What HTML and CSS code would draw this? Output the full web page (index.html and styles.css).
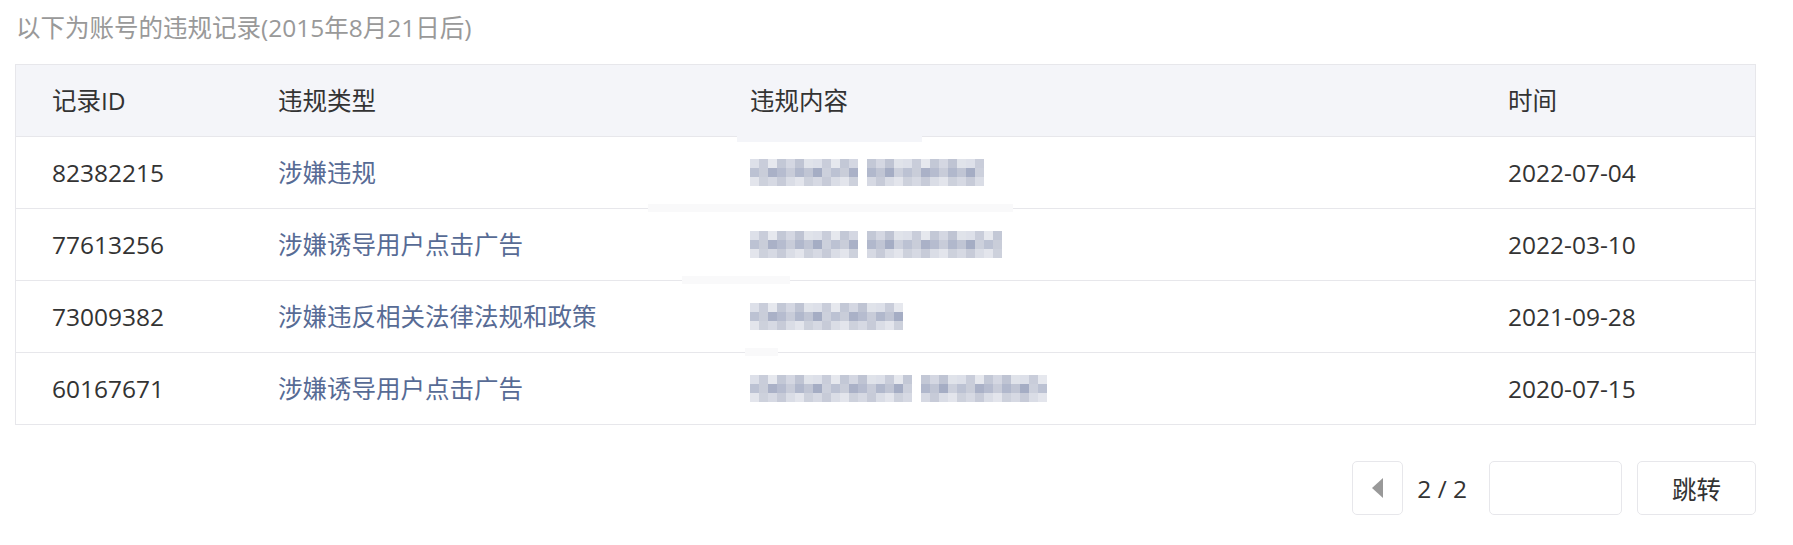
FILE: index.html
```html
<!DOCTYPE html>
<html lang="zh-CN">
<head>
<meta charset="utf-8">
<title>违规记录</title>
<link rel="stylesheet" href="styles.css">
</head>
<body>
<div class="page">
  <p class="title">以下为账号的违规记录(2015年8月21日后)</p>
  <div class="table">
    <div class="row head">
      <div class="cell">记录ID</div>
      <div class="cell">违规类型</div>
      <div class="cell">违规内容</div>
      <div class="cell">时间</div>
    </div>
    <div class="tbody">
      <div class="row">
        <div class="cell">82382215</div>
        <div class="cell"><a class="link" href="#">涉嫌违规</a></div>
        <div class="cell"><span class="blur w108"></span><span class="blur w117"></span></div>
        <div class="cell">2022-07-04</div>
      </div>
      <div class="row">
        <div class="cell">77613256</div>
        <div class="cell"><a class="link" href="#">涉嫌诱导用户点击广告</a></div>
        <div class="cell"><span class="blur w108"></span><span class="blur w135"></span></div>
        <div class="cell">2022-03-10</div>
      </div>
      <div class="row">
        <div class="cell">73009382</div>
        <div class="cell"><a class="link" href="#">涉嫌违反相关法律法规和政策</a></div>
        <div class="cell"><span class="blur w153"></span></div>
        <div class="cell">2021-09-28</div>
      </div>
      <div class="row">
        <div class="cell">60167671</div>
        <div class="cell"><a class="link" href="#">涉嫌诱导用户点击广告</a></div>
        <div class="cell"><span class="blur w162"></span><span class="blur w126"></span></div>
        <div class="cell">2020-07-15</div>
      </div>
    </div>
    <div class="smear s1"></div>
    <div class="smear s2"></div>
    <div class="smear s3"></div>
    <div class="smear s4"></div>
  </div>
  <div class="pager">
    <button class="btn prev" type="button"><span class="tri"></span></button>
    <span class="count">2 / 2</span>
    <input class="btn jump-input" type="text">
    <button class="btn jump" type="button">跳转</button>
  </div>
</div>
</body>
</html>
```
FILE: styles.css
```css
* { box-sizing: border-box; }

body {
  margin: 0;
  background: #fff;
  font-family: "Open Sans", "Noto Sans CJK SC", sans-serif;
  color: #333;
}

.page {
  padding-left: 15px;
  width: 1756px;
}

.title {
  margin: 0;
  padding: 12px 0 0 1px;
  font-size: 24.5px;
  line-height: 32px;
  color: #999;
}

.table {
  position: relative;
  margin-top: 20px;
  width: 1741px;
  border: 1px solid #e7e7eb;
}

.row {
  display: grid;
  grid-template-columns: 226px 472px 758px 1fr;
  height: 72px;
  border-bottom: 1px solid #e7e7eb;
  font-size: 24.5px;
  line-height: 32px;
}

.head {
  background: #f4f5f9;
}

.tbody .row:last-child {
  border-bottom: 0;
  height: 71px;
}

.cell {
  display: flex;
  align-items: center;
  gap: 9px;
  padding-left: 36px;
  white-space: nowrap;
}

.link {
  color: #576b95;
  text-decoration: none;
}

.blur {
  display: block;
  height: 27px;
  background-color: #cdd1dd;
  background-image:
    linear-gradient(90deg, #dde0e9 0 9px, #c9cdda 9px 18px, #e6e8ee 18px 27px, #c3c8d6 27px 36px, #d4d7e2 36px 45px, #bfc4d3 45px 54px, #e0e3ea 54px 63px),
    linear-gradient(90deg, #bcc2d3 0 9px, #c9cdd9 9px 18px, #aab1c7 18px 27px, #b6bccf 27px 36px, #c8ccd9 36px 45px, #b1b8cc 45px 54px, #c0c5d4 54px 63px, #a5adc4 63px 72px, #ccd0dc 72px 81px),
    linear-gradient(90deg, #e3e5ec 0 9px, #cdd1dc 9px 18px, #d6d9e3 18px 27px, #c7cbd8 27px 36px, #dadde6 36px 45px);
  background-size: 63px 9px, 81px 9px, 45px 9px;
  background-position: 0 0, 0 9px, 0 18px;
  background-repeat: repeat-x;
}

.blur + .blur {
  background-position: -27px 0, -45px 9px, -18px 18px;
}

.w108 { width: 108px; }
.w117 { width: 117px; }
.w126 { width: 126px; }
.w135 { width: 135px; }
.w153 { width: 153px; }
.w162 { width: 162px; }

.smear {
  position: absolute;
  background: #f9f9fa;
}
.s1 { left: 721px; top: 70px; width: 185px; height: 7px; background: #f4f5f9; }
.s2 { left: 632px; top: 139px; width: 365px; height: 8px; }
.s3 { left: 666px; top: 211px; width: 108px; height: 8px; }
.s4 { left: 729px; top: 283px; width: 33px; height: 8px; }

.pager {
  display: flex;
  justify-content: flex-end;
  align-items: center;
  width: 1741px;
  margin-top: 36px;
}

.btn {
  height: 54px;
  border: 1px solid #e7e7eb;
  border-radius: 5px;
  background: #fff;
  font-family: inherit;
}

.prev {
  width: 51px;
  padding: 0;
  display: flex;
  align-items: center;
  justify-content: center;
}

.tri {
  width: 0;
  height: 0;
  border-top: 10px solid transparent;
  border-bottom: 10px solid transparent;
  border-right: 11px solid #999;
}

.count {
  margin: 0 22px 0 14px;
  font-size: 24.5px;
  color: #333;
}

.jump-input {
  width: 133px;
  margin-right: 15px;
}

.jump {
  width: 119px;
  padding: 0;
  font-size: 24.5px;
  color: #333;
}
```
